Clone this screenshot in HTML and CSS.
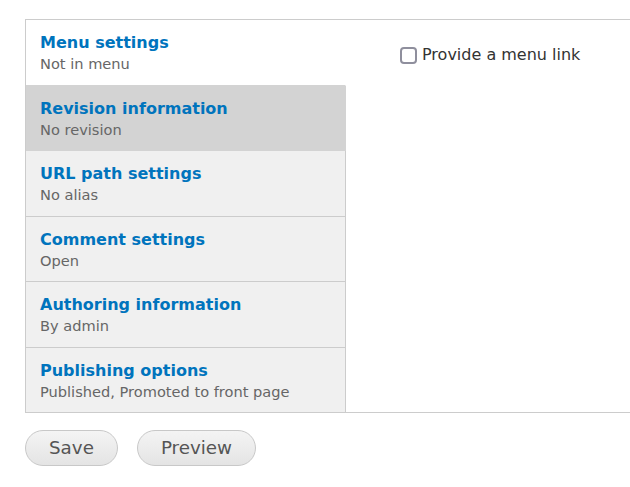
FILE: index.html
```html
<!DOCTYPE html>
<html lang="en">
<head>
<meta charset="utf-8">
<title>Node edit</title>
<link rel="stylesheet" href="styles.css">
</head>
<body>
<div class="vtabs">
  <ul class="vtabs-menu">
    <li class="vtab is-selected"><a class="vtab-link" href="#"><strong class="vtab-title">Menu settings</strong><span class="vtab-summary">Not in menu</span></a></li>
    <li class="vtab is-hover"><a class="vtab-link" href="#"><strong class="vtab-title">Revision information</strong><span class="vtab-summary">No revision</span></a></li>
    <li class="vtab"><a class="vtab-link" href="#"><strong class="vtab-title">URL path settings</strong><span class="vtab-summary">No alias</span></a></li>
    <li class="vtab"><a class="vtab-link" href="#"><strong class="vtab-title">Comment settings</strong><span class="vtab-summary">Open</span></a></li>
    <li class="vtab"><a class="vtab-link" href="#"><strong class="vtab-title">Authoring information</strong><span class="vtab-summary">By admin</span></a></li>
    <li class="vtab"><a class="vtab-link" href="#"><strong class="vtab-title">Publishing options</strong><span class="vtab-summary">Published, Promoted to front page</span></a></li>
  </ul>
  <div class="vtabs-pane">
    <label class="check"><input class="check-box" type="checkbox"><span class="check-label">Provide a menu link</span></label>
  </div>
</div>
<div class="actions">
  <button class="button" type="button">Save</button>
  <button class="button" type="button">Preview</button>
</div>
</body>
</html>
```

FILE: styles.css
```css
html, body {
  margin: 0;
  padding: 0;
  background: #fff;
  font-family: "DejaVu Sans", "Noto Sans", sans-serif;
  overflow: hidden;
}

.vtabs {
  display: flex;
  margin: 19px 0 0 25px;
  border: 1px solid #ccc;
  border-right: 0;
}

.vtabs-menu {
  list-style: none;
  margin: 0;
  padding: 0;
  width: 320px;
  flex: none;
}

.vtab {
  background: #f0f0f0;
  border-right: 1px solid #ccc;
  border-bottom: 1px solid #ccc;
}

.vtab:last-child {
  border-bottom: 0;
}

.vtab.is-selected {
  background: #fff;
  border-right-color: #fff;
  border-bottom-color: #d3d3d3;
}

.vtab.is-hover {
  background: #d3d3d3;
  border-right-color: #d3d3d3;
  border-bottom-color: #d3d3d3;
}

.vtab-link {
  display: block;
  padding: 12px 14px 9.5px 14px;
  text-decoration: none;
}

.vtab-title {
  display: block;
  font-size: 16px;
  line-height: 21px;
  font-weight: bold;
  color: #0074bd;
}

.vtab-summary {
  display: block;
  font-size: 14.6px;
  line-height: 22px;
  color: #666;
}

.vtabs-pane {
  flex: 1;
  padding: 25px 0 0 54px;
}

.check {
  display: flex;
  align-items: center;
  gap: 5px;
  font-size: 16px;
  line-height: 20px;
  color: #333;
}

.check-box {
  appearance: none;
  -webkit-appearance: none;
  margin: 0;
  width: 17px;
  height: 17px;
  box-sizing: border-box;
  border: 2px solid #8f8f9d;
  border-radius: 4px;
  background: #fff;
}

.actions {
  display: flex;
  gap: 19px;
  margin: 17px 0 0 25px;
}

.button {
  font-family: "DejaVu Sans", "Noto Sans", sans-serif;
  font-size: 18.3px;
  line-height: 20px;
  height: 36px;
  padding: 0 23px;
  border: 1px solid #c8c8c8;
  border-radius: 20px;
  background: linear-gradient(to bottom, #f4f4f4, #e4e4e4);
  color: #555;
}
```
